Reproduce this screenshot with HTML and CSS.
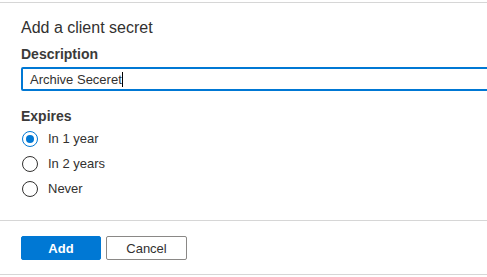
FILE: index.html
```html
<!DOCTYPE html>
<html lang="en">
<head>
    <meta charset="UTF-8">
    <meta name="viewport" content="width=device-width, initial-scale=1.0">
    <title>Add a client secret</title>
    <link rel="stylesheet" href="styles.css">
</head>
<body>

    <div class="panel">
        <!-- Secret form -->
        <div class="form">
            <h2 class="title">Add a client secret</h2>

            <label class="field-label" for="description">Description</label>
            <div class="text-input">
                <span class="value">Archive Seceret</span><span class="caret"></span>
            </div>

            <div class="field-label expires-label">Expires</div>
            <div class="radio-group">
                <div class="radio checked"><span class="dot"></span><span>In 1 year</span></div>
                <div class="radio"><span class="dot"></span><span>In 2 years</span></div>
                <div class="radio"><span class="dot"></span><span>Never</span></div>
            </div>
        </div>

        <!-- Footer buttons -->
        <div class="footer">
            <button class="btn primary">Add</button>
            <button class="btn">Cancel</button>
        </div>
    </div>

</body>
</html>
```

FILE: styles.css
```css
/* General Reset */
* {
    margin: 0;
    padding: 0;
    box-sizing: border-box;
}

body {
    font-family: 'Liberation Sans', Arial, sans-serif;
    background-color: #fff;
    color: #323130;
    overflow: hidden;
}

.panel {
    margin-top: 2px;
    border-top: 1px solid #d6d6d6;
}

/* Form area */
.form {
    padding: 14px 0 0 21px;
    height: 218px;
    border-bottom: 1px solid #d6d6d6;
}

.title {
    font-size: 16px;
    font-weight: normal;
    line-height: 22px;
    margin-bottom: 5px;
}

.field-label {
    display: block;
    font-size: 14px;
    font-weight: 600;
    color: #3b3a39;
    line-height: 20px;
    margin-bottom: 3px;
}

.text-input {
    display: flex;
    align-items: center;
    width: 480px;
    height: 24px;
    border: 2px solid #0078d4;
    border-radius: 2px;
    padding-left: 7px;
    font-size: 13px;
}

.caret {
    display: inline-block;
    width: 1px;
    height: 15px;
    background-color: #000;
}

.expires-label {
    margin-top: 15px;
    margin-bottom: 0;
}

/* Radio buttons */
.radio-group {
    display: flex;
    flex-direction: column;
}

.radio {
    display: flex;
    align-items: center;
    height: 25px;
    font-size: 13px;
}

.radio .dot {
    width: 16px;
    height: 16px;
    border: 1px solid #323130;
    border-radius: 50%;
    margin: 0 10px 0 1px;
    display: flex;
    align-items: center;
    justify-content: center;
}

.radio.checked .dot {
    border-color: #0078d4;
}

.radio.checked .dot::after {
    content: '';
    width: 8px;
    height: 8px;
    border-radius: 50%;
    background-color: #0078d4;
}

/* Footer */
.footer {
    display: flex;
    gap: 5px;
    padding: 15px 0 14px 21px;
    border-bottom: 1px solid #d6d6d6;
}

.btn {
    font-family: inherit;
    width: 81px;
    height: 24px;
    font-size: 13px;
    color: #323130;
    background-color: #fff;
    border: 1px solid #8a8886;
    border-radius: 2px;
}

.btn.primary {
    width: 80px;
    background-color: #0078d4;
    border-color: #0078d4;
    color: #fff;
    font-weight: 600;
}
```
